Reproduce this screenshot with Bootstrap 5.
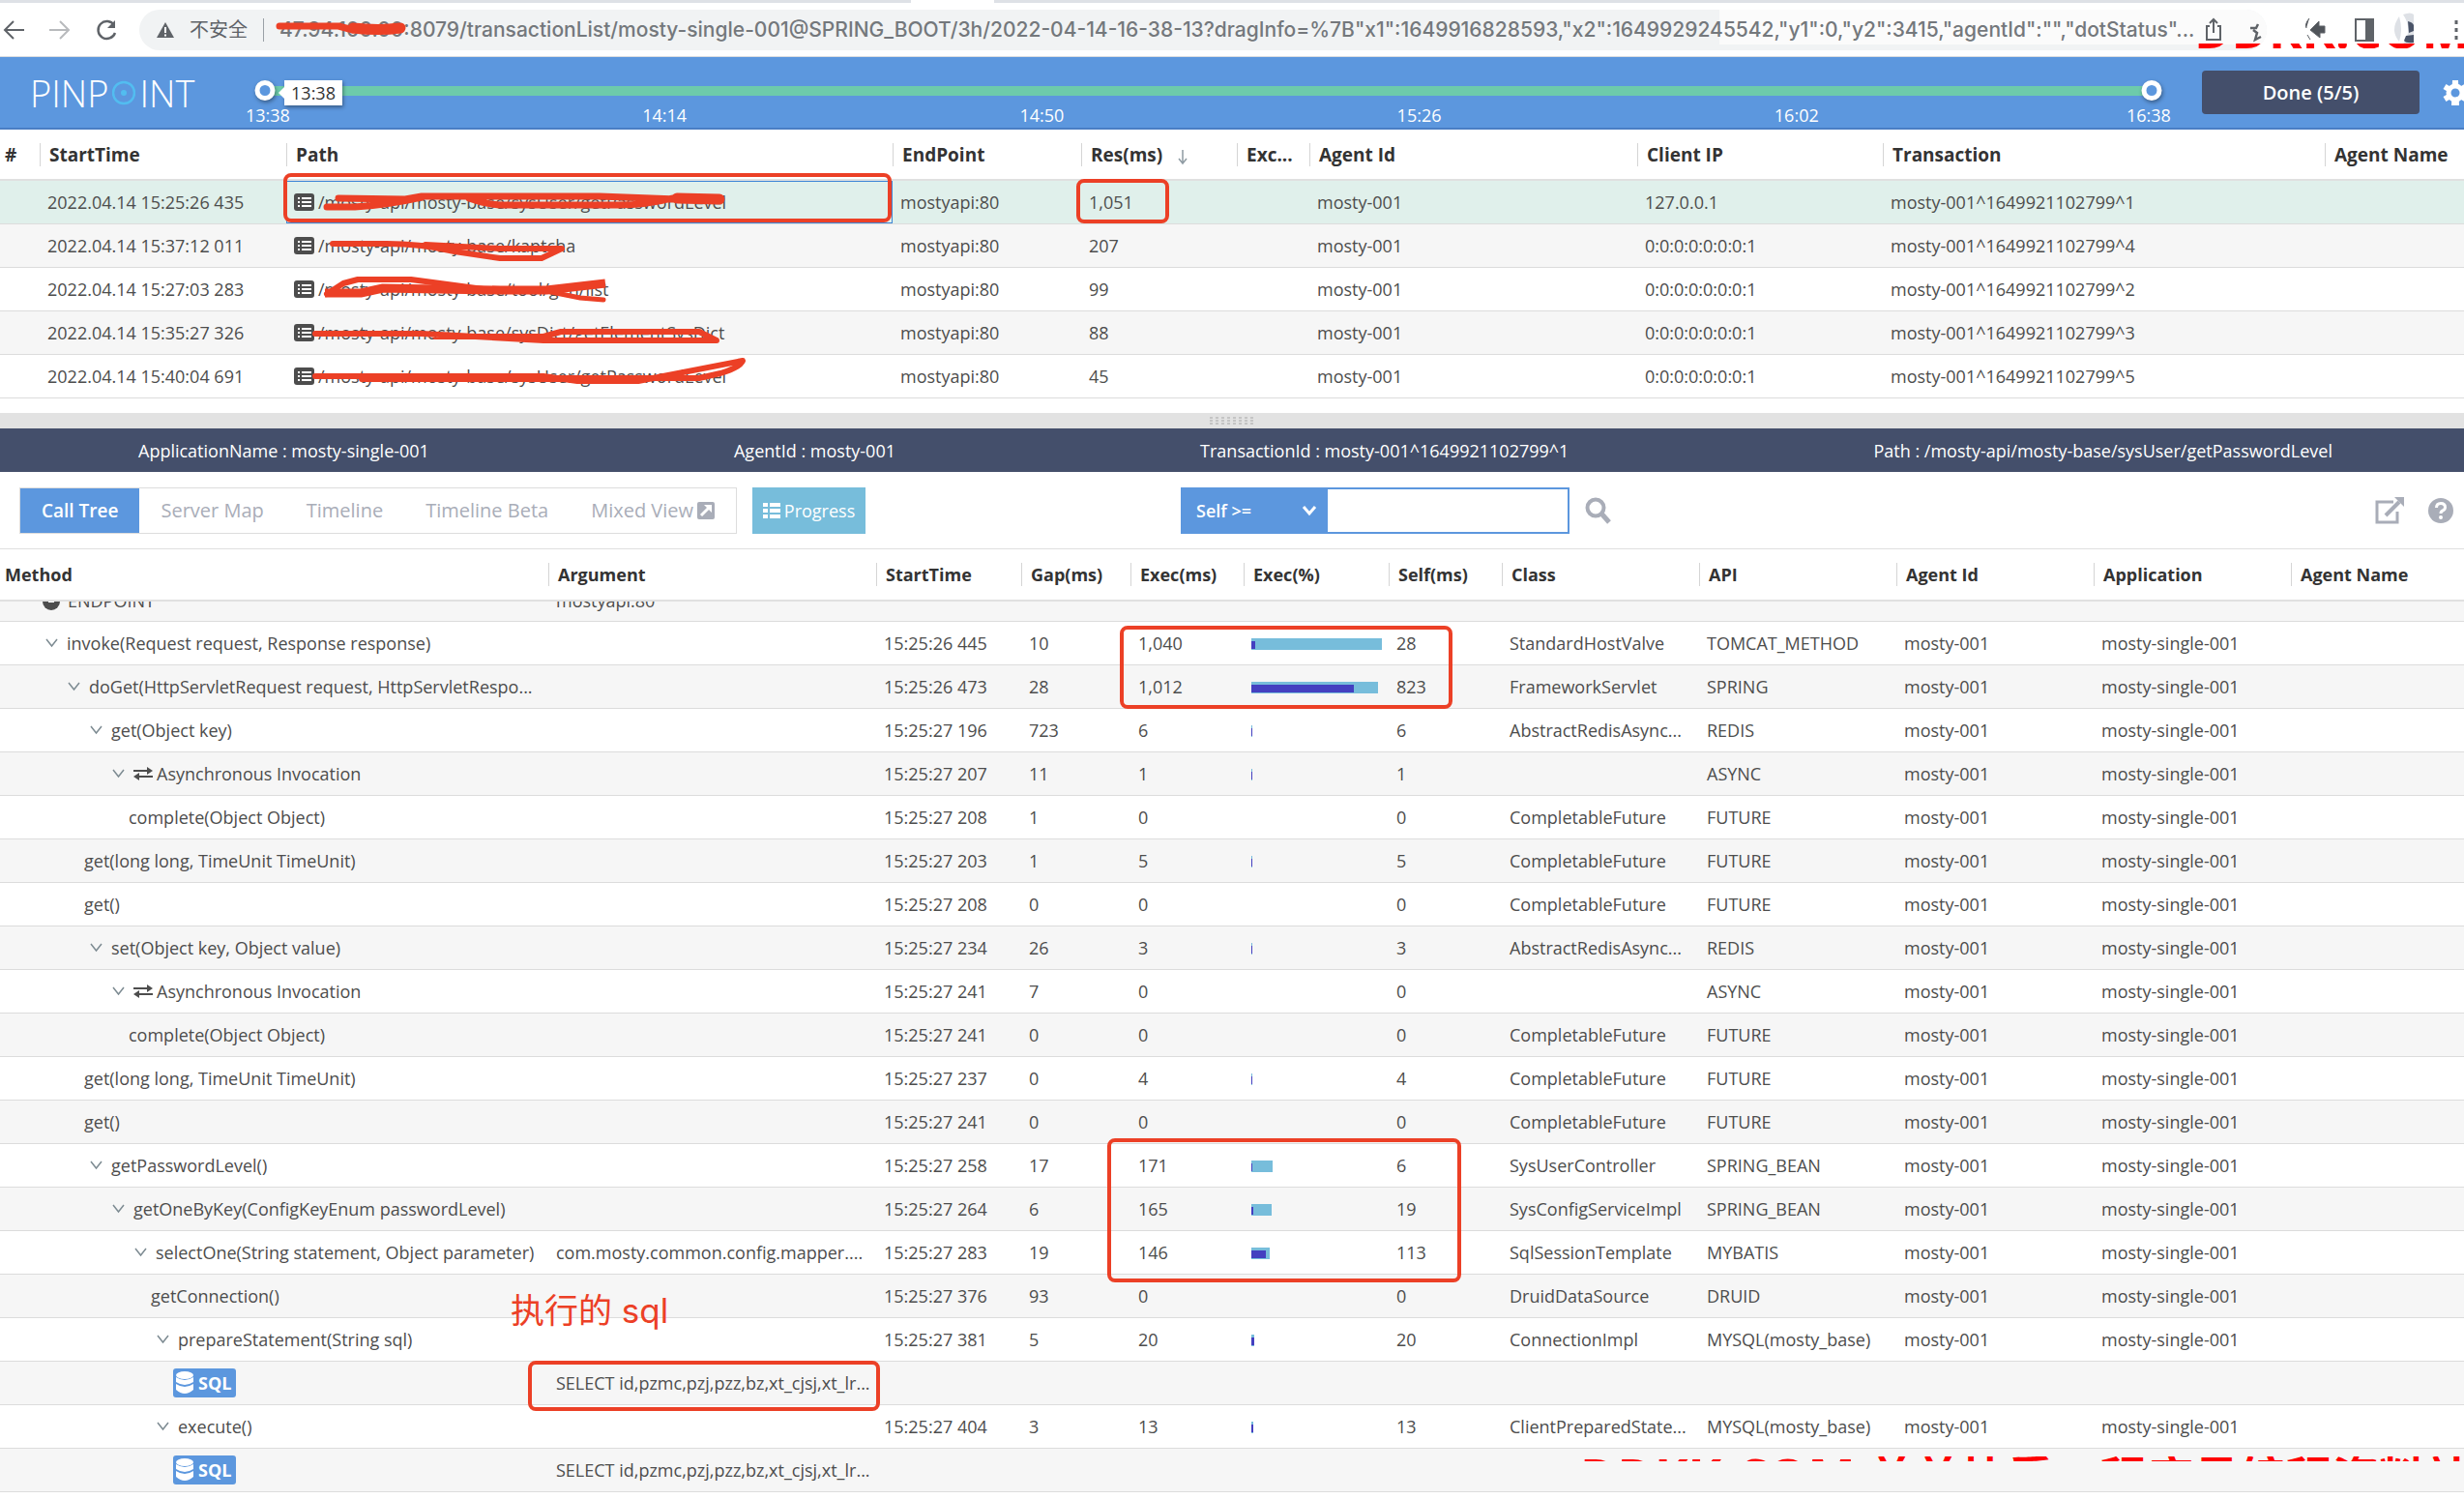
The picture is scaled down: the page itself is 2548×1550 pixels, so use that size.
<!DOCTYPE html>
<html lang="zh-CN">
<head>
<meta charset="utf-8">
<meta name="viewport" content="width=device-width, initial-scale=1">
<title>Pinpoint - Transaction List</title>
<link href="https://cdn.jsdelivr.net/npm/bootstrap@5.3.0/dist/css/bootstrap.min.css" rel="stylesheet">
<style>
:root{--blue:#5c97de;--navy:#444f6b;--line:#e0e0e0;--red:#ec4026}
body{font-family:"Open Sans","Noto Sans CJK SC",sans-serif;font-size:18px;line-height:24px;color:#4d4d4d;background:#fff;overflow:hidden;position:relative}
svg{display:block;flex:none}
.iconbtn{border:0;background:none;padding:0;color:inherit}
/* browser chrome */
.tabstrip{height:3px;background:#dee1e6}
.tabgap{width:86px;margin-left:942px;background:#fff}
.chrome{height:56px;border-bottom:1px solid #dadce0;padding-left:2px;color:#5f6368}
.omni{height:42px;margin-left:22px;border-radius:21px;background:#f1f3f4;overflow:hidden;padding-left:18px}
.omni-fade{background:#fbfbfb;height:36px;width:566px;right:0;top:0}
.urlbox{border:0;background:none;padding:0;font-family:Inter,sans-serif;font-size:21px;font-weight:500;color:#74787c;outline:0}
.omni-cn{font-size:20px}
.omni-sep{width:1px;height:24px;background:#9aa0a6}
/* header */
.topbar{height:75px;background:var(--blue);border-bottom:2px solid #4a7ec4;color:#fff;padding-left:31px;overflow:hidden}
.logo{font-weight:300;font-size:38px;line-height:40px;color:#fff;width:243px}
.logo svg{margin:0 4px}
.track{height:10px;background:#6dcbab}
.knob{width:21px;height:21px;border:5px solid #fff;border-radius:50%;background:var(--blue);box-shadow:1px 2px 4px rgba(0,0,0,.4);top:-6px}
.tip{left:20px;top:-6px;width:60px;height:26px;line-height:26px;background:#fff;color:#333;box-shadow:1px 2px 4px rgba(0,0,0,.4)}
.tip::before{content:"";position:absolute;left:-6px;top:7px;border:6px solid transparent;border-left:0;border-right-color:#fff}
.tick-first{margin-left:-20px}
.tick-last{width:0;flex:none;margin:0 26px 0 -26px;white-space:nowrap}
.btn-done{width:225px;height:45px;margin-left:52px;background:var(--navy);color:#fff;font-weight:600;font-size:20px;line-height:24px;border:0;border-radius:4px;padding:0}
/* grids */
.grid{table-layout:fixed;width:100%;border-collapse:separate;border-spacing:0}
.grid th{height:53px;padding:0;border-bottom:2px solid var(--line);color:#333;font-weight:700}
#transactions th{font-size:19px}
#calltree th{height:54px}
.grid th>span{display:block;height:24px;padding-left:9px;border-left:1px solid #d5d5d5;white-space:nowrap}
.grid th:first-child>span{border-left:0;padding-left:5px}
.grid td{height:45px;padding:0 0 0 8px;border-bottom:1px solid #dcdcdc;white-space:nowrap;overflow:hidden;text-overflow:ellipsis}
.grid tr.alt td{background:#f6f6f6}
.grid tr.sel td{background:#e0f0eb}
.grid td.focus{box-shadow:inset 0 0 0 1px #3f86d6}
.splitter{height:16px;background:#e2e2e2;margin-top:15px}
.infobar{height:45px;background:var(--navy);color:#fff;padding:0 136px 0 143px}
/* tree toolbar */
.tools{height:80px;border-bottom:1px solid var(--line);padding:0 11px 0 20px}
.views{height:48px;border:1px solid #ddd}
.views button{border:0;background:none;padding:0 22px;font-size:20px;color:#a9adb8}
.views button.on{background:var(--blue);color:#fff;font-weight:600;font-size:19px}
.btn-progress{height:48px;width:117px;margin-left:16px;background:#77bddb;color:#fff;border:0;border-radius:0;padding:0;font-size:18px}
.selfbox{width:152px;height:48px}
.selfbox select{appearance:none;width:100%;height:48px;border:0;border-radius:0;background:var(--blue);color:#fff;font-weight:600;padding:0 16px}
.selfbox svg{right:11px;top:17px}
.selfval{width:250px;height:48px;border:2px solid var(--blue);border-left:0;outline:0;padding:0 8px}
.finder{margin-left:326px}
.clipcell{height:20px;overflow:hidden;display:flex;align-items:flex-end}
.grid tr.cut td{height:21px}
.clipcell>div{height:33px;display:flex;align-items:flex-start}
.grid td.meth{padding-left:0}
.chev{width:13px;margin-right:9px}
.bar{height:12px;background:#77bddb;min-width:1px;margin-top:2px}
.barbox{width:136px}
.bar-self{height:8px;top:3px;left:0;background:#4440c0;min-width:1px}
.sqltag{width:65px;height:30px;background:var(--blue);color:#fff;font-weight:700;border-radius:3px;padding:0 2px}
/* annotations drawn over the page */
.anno{left:0;top:0;pointer-events:none}
.note{left:528px;top:1332px;color:var(--red);font-family:Inter,"Noto Sans CJK SC",sans-serif;font-size:35px;line-height:46px}
.wm{color:#f00;font-weight:700;font-size:52px;line-height:60px;height:5px;overflow:hidden;white-space:nowrap;right:0}
.wm-top{left:2269px;top:45px}
.wm-top div{margin-top:-45px}
.wm-bot{left:1634px;top:1506px}
.wm-bot div{margin-top:-10px}
.wm-cn{font-size:48px}
</style>
</head>
<body>
<div class="tabstrip d-flex"><div class="tabgap"></div></div>
<div class="chrome d-flex align-items-center">
  <button class="iconbtn" aria-label="Back"><svg width="24" height="24" fill="none" stroke="#5f6368" stroke-width="2"><path d="M23 12H3M12 3l-9 9 9 9"/></svg></button>
  <button class="iconbtn ms-4" aria-label="Forward"><svg width="24" height="24" fill="none" stroke="#b8babd" stroke-width="2"><path d="M1 12h20M12 3l9 9-9 9"/></svg></button>
  <button class="iconbtn ms-4" aria-label="Reload"><svg width="24" height="24" fill="none" stroke="#5f6368" stroke-width="2.4"><path d="M20 7a9 9 0 1 0 1 8"/><path d="M21 2v8h-8z" fill="#5f6368" stroke="none"/></svg></button>
  <div class="omni d-flex align-items-center position-relative flex-grow-1">
    <div class="omni-fade position-absolute"></div>
    <svg class="position-relative" width="18" height="18"><path d="M9 1l9 16H0z" fill="#5f6368"/><path d="M9 6v6M9 13.500v2" stroke="#fff" stroke-width="2"/></svg>
    <span class="omni-cn ms-3">不安全</span><span class="omni-sep mx-3"></span>
    <label class="visually-hidden" for="url">URL</label>
    <input id="url" class="urlbox flex-grow-1 position-relative" value="47.94.100.00:8079/transactionList/mosty-single-001@SPRING_BOOT/3h/2022-04-14-16-38-13?dragInfo=%7B&quot;x1&quot;:1649916828593,&quot;x2&quot;:1649929245542,&quot;y1&quot;:0,&quot;y2&quot;:3415,&quot;agentId&quot;:&quot;&quot;,&quot;dotStatus&quot;...">
    <svg class="position-relative" width="64" height="30" fill="none" stroke="#5f6368" stroke-width="2"><path d="M5 11H2v14h14V11h-3M9 18V4M5 8l4-4 4 4"/><path d="M47 13h6l2-4M50 15l4 3-2 7 6-3" stroke-width="2.500"/></svg>
  </div>
  <svg class="ms-4" width="180" height="44"><path d="M20 10q-5 6-3 10M21 22l9-9v5h6v7h-5v5zM18 27l3 5" fill="#50545a" stroke="#5f6368"/><path d="M68 11h18v22H68z" fill="none" stroke="#5f6368" stroke-width="2"/><path d="M78 10h9v24h-9z" fill="#5f6368"/><path d="M113 8q-10 14 0 26 4-12 0-26zM117 6q8-3 11 0v32h-12q12-16 1-32z" fill="#dee1e6"/><path d="M122 13q5 1 6 4v6l-5 2zM120 28l8-1v8q-8 1-10-2z" fill="#4a5468"/><path d="M172 12v4M172 20v4M172 28v4" stroke="#5f6368" stroke-width="3"/></svg>
</div>

<header class="topbar d-flex align-items-center">
  <a class="logo d-flex align-items-center text-decoration-none" href="#">PINP<svg width="24" height="26"><circle cx="12" cy="13" r="11" fill="none" stroke="#52bdf0" stroke-width="2.500"/><circle cx="12" cy="13" r="3" fill="#52bdf0"/></svg>INT</a>
  <div class="flex-grow-1 pt-4 mt-1">
    <div class="track position-relative">
      <div class="knob position-absolute start-0 translate-middle-x"></div>
      <div class="tip position-absolute text-center">13:38</div>
      <div class="knob position-absolute start-100 translate-middle-x"></div>
    </div>
    <div class="d-flex pt-2">
      <div class="w-100"><div class="tick-first">13:38</div></div><div class="w-100">14:14</div><div class="w-100">14:50</div><div class="w-100">15:26</div><div class="w-100">16:02</div><div class="tick-last">16:38</div>
    </div>
  </div>
  <button class="btn-done me-4">Done (5/5)</button>
  <button class="iconbtn" aria-label="Settings"><svg width="22" height="26" viewBox="0 0 22 26" overflow="hidden"><g fill="#fff"><circle cx="13" cy="13" r="9.500"/><path d="M10 0h6l1 26H9zM.5 9l3-5 22 13-3 5zM.5 17l3 5 22-13-3-5z"/></g><circle cx="13" cy="13" r="4.500" fill="#5c97de"/></svg></button>
</header>

<table class="grid" id="transactions">
  <colgroup><col style="width:41px"><col style="width:255px"><col><col style="width:195px"><col style="width:161px"><col style="width:75px"><col style="width:339px"><col style="width:254px"><col style="width:457px"><col style="width:144px"></colgroup>
  <thead><tr><th><span>#</span></th><th><span>StartTime</span></th><th><span>Path</span></th><th><span>EndPoint</span></th><th><span class="d-flex align-items-center">Res(ms)<svg class="ms-3 mt-1" width="10" height="22" fill="none" stroke="#8f9ba3" stroke-width="1.500"><path d="M5 4v14M1 13l4 5 4-5"/></svg></span></th><th><span>Exc...</span></th><th><span>Agent Id</span></th><th><span>Client IP</span></th><th><span>Transaction</span></th><th><span>Agent Name</span></th></tr></thead>
  <tbody></tbody>
</table>

<div class="splitter d-flex justify-content-center align-items-center"><svg width="48" height="8"><path d="M1 1h46M1 4h46M1 7h46" stroke="#c4c4c4" stroke-width="2" stroke-dasharray="3 3"/></svg></div>
<div class="infobar d-flex justify-content-between align-items-center">
  <span>ApplicationName : mosty-single-001</span><span>AgentId : mosty-001</span><span>TransactionId : mosty-001^1649921102799^1</span><span>Path : /mosty-api/mosty-base/sysUser/getPasswordLevel</span>
</div>

<div class="tools d-flex align-items-center">
  <div class="views d-flex">
    <button class="on">Call Tree</button><button>Server Map</button><button>Timeline</button><button>Timeline Beta</button>
    <button class="d-flex align-items-center">Mixed View<svg class="ms-1" width="18" height="18"><rect width="18" height="18" rx="2" fill="#a9adb8"/><path d="M4 14l8-8" stroke="#fff" stroke-width="3"/><path d="M7 3h8v8z" fill="#fff"/></svg></button>
  </div>
  <button class="btn-progress d-flex align-items-center justify-content-center"><svg class="me-1" width="18" height="16" fill="#fff"><path d="M0 0h5v4H0zM7 0h11v4H7zM0 6h5v4H0zM7 6h11v4H7zM0 12h5v4H0zM7 12h11v4H7z"/></svg>Progress</button>
  <div class="finder d-flex align-items-center">
    <div class="selfbox position-relative">
      <label class="visually-hidden" for="cond">Condition</label>
      <select id="cond"><option>Self &gt;=</option></select>
      <svg class="position-absolute" width="16" height="14" fill="none" stroke="#fff" stroke-width="3"><path d="M2 3l6 7 6-7"/></svg>
    </div>
    <label class="visually-hidden" for="val">Milliseconds</label>
    <input id="val" class="selfval" type="text">
    <button class="iconbtn ms-3" aria-label="Search"><svg width="28" height="28" fill="none" stroke="#a9adb8" stroke-width="4"><circle cx="11" cy="11" r="8.500"/><path d="M17 17l8 9" stroke-width="5"/></svg></button>
  </div>
  <button class="iconbtn ms-auto" aria-label="Open in new window"><svg width="31" height="28" fill="none" stroke="#a9adb8" stroke-width="3"><path d="M19 5H2v21h21V15"/><path d="M11 19L25 5" stroke-width="4"/><path d="M20 0h10v10z" fill="#a9adb8" stroke="none"/></svg></button>
  <button class="iconbtn ms-4" aria-label="Help"><svg width="26" height="26"><circle cx="13" cy="13" r="13" fill="#a9adb8"/><path d="M8.500 10q0-4.500 4.500-4.500t4.500 4q0 2.500-2.500 3.500-2 .8-2 3" fill="none" stroke="#fff" stroke-width="3"/><circle cx="13" cy="20" r="2" fill="#fff"/></svg></button>
</div>

<table class="grid" id="calltree">
  <colgroup><col><col style="width:339px"><col style="width:150px"><col style="width:113px"><col style="width:117px"><col style="width:150px"><col style="width:117px"><col style="width:204px"><col style="width:204px"><col style="width:204px"><col style="width:204px"><col style="width:179px"></colgroup>
  <thead><tr><th><span>Method</span></th><th><span>Argument</span></th><th><span>StartTime</span></th><th><span>Gap(ms)</span></th><th><span>Exec(ms)</span></th><th><span>Exec(%)</span></th><th><span>Self(ms)</span></th><th><span>Class</span></th><th><span>API</span></th><th><span>Agent Id</span></th><th><span>Application</span></th><th><span>Agent Name</span></th></tr></thead>
  <tbody></tbody>
</table>

<svg class="anno position-absolute" width="2548" height="1550" fill="none" stroke="#ec4026" stroke-width="4" stroke-linejoin="round">
  <rect x="295" y="181" width="625" height="47" rx="6"/><rect x="1115" y="187" width="92" height="42" rx="6"/>
  <rect x="1160" y="649" width="340" height="82" rx="6"/><rect x="1147" y="1179" width="362" height="145" rx="6"/><rect x="548" y="1409" width="360" height="48" rx="6"/>
  <g stroke-linecap="round">
    <path stroke-width="7" d="M289 27H350L365 31"/><path stroke-width="11" d="M365 29Q392 32 414 29"/>
    <path stroke-width="7" d="M350 205L419 206 436 203H620L700 206M338 214H367Q400 212 436 204M485 205Q505 212 520 212H637Q670 212 695 205"/><path stroke-width="11" d="M700 205L744 206"/>
    <path stroke-width="6" d="M344 252H400Q436 252 470 260L517 267H560L581 257H517L440 253"/>
    <path stroke-width="6" d="M338 304L355 293 370 289H425L500 299"/><path stroke-width="9" stroke-linecap="butt" d="M336 303H373L396 298 517 300H565L626 293"/><path stroke-width="5" d="M565 301L600 308 624 310"/>
    <path stroke-width="6" d="M326 345H436L562 352H741L723 343H580L562 348H450"/>
    <path stroke-width="6" d="M326 389H562L597 394H660Q700 386 768 373 765 380 745 386L723 391H562M374 392H660"/>
  </g>
</svg>
<div class="note position-absolute">执行的 sql</div>
<div class="wm wm-top position-absolute"><div>DDKK.COM</div></div>
<div class="wm wm-bot position-absolute"><div>DDKK.COM <span class="wm-cn">弟弟快看，程序员编程资料站</span></div></div>

<script>
const listIcon='<svg class="me-1" width="21" height="18"><rect width="21" height="18" rx="3" fill="#4d4d4d"/><path d="M4 5h2M4 9h2M4 13h2M8 5h10M8 9h10M8 13h10" stroke="#fff" stroke-width="2"/></svg>';
const tx=[
 ['2022.04.14 15:25:26 435','/mosty-api/mosty-base/sysUser/getPasswordLevel','1,051','127.0.0.1',1],
 ['2022.04.14 15:37:12 011','/mosty-api/mosty-base/kaptcha','207','0:0:0:0:0:0:0:1',4],
 ['2022.04.14 15:27:03 283','/mosty-api/mosty-base/tool/gen/list','99','0:0:0:0:0:0:0:1',2],
 ['2022.04.14 15:35:27 326','/mosty-api/mosty-base/sysDict/getElementSysDict','88','0:0:0:0:0:0:0:1',3],
 ['2022.04.14 15:40:04 691','/mosty-api/mosty-base/sysUser/getPasswordLevel','45','0:0:0:0:0:0:0:1',5]];
document.querySelector('#transactions tbody').innerHTML=tx.map((r,i)=>`<tr class="${i?(i%2?'alt':''):'sel'}"><td></td><td>${r[0]}</td><td class="${i?'':'focus'}"><div class="d-flex align-items-center">${listIcon}${r[1]}</div></td><td>mostyapi:80</td><td>${r[2]}</td><td></td><td>mosty-001</td><td>${r[3]}</td><td>mosty-001^1649921102799^${r[4]}</td><td></td></tr>`).join('');

const chev='<svg class="chev" width="13" height="10" fill="none" stroke="#7d8b92" stroke-width="1.500"><path d="M1 1l5.500 7L12 1"/></svg>';
const swap='<svg class="me-1" width="20" height="14"><path d="M0 4h14M6 10h14" stroke="#4d4d4d" stroke-width="2"/><path d="M14 0l6 4-6 4zM6 6l-6 4 6 4z" fill="#4d4d4d"/></svg>';
const db='<svg width="20" height="24" fill="#fff"><ellipse cx="10" cy="4" rx="9" ry="4"/><path d="M1 6q9 6 18 0v5q-9 6-18 0zM1 13q9 6 18 0v6q-9 8-18 0z"/></svg>';
/* kind: c = branch, l = leaf, a = asynchronous branch, s = SQL */
const rows=[
 ['c',0,'invoke(Request request, Response response)','','15:25:26 445','10','1,040','28','StandardHostValve','TOMCAT_METHOD'],
 ['c',1,'doGet(HttpServletRequest request, HttpServletRespo...','','15:25:26 473','28','1,012','823','FrameworkServlet','SPRING'],
 ['c',2,'get(Object key)','','15:25:27 196','723','6','6','AbstractRedisAsync...','REDIS'],
 ['a',3,'Asynchronous Invocation','','15:25:27 207','11','1','1','','ASYNC'],
 ['l',4,'complete(Object Object)','','15:25:27 208','1','0','0','CompletableFuture','FUTURE'],
 ['l',2,'get(long long, TimeUnit TimeUnit)','','15:25:27 203','1','5','5','CompletableFuture','FUTURE'],
 ['l',2,'get()','','15:25:27 208','0','0','0','CompletableFuture','FUTURE'],
 ['c',2,'set(Object key, Object value)','','15:25:27 234','26','3','3','AbstractRedisAsync...','REDIS'],
 ['a',3,'Asynchronous Invocation','','15:25:27 241','7','0','0','','ASYNC'],
 ['l',4,'complete(Object Object)','','15:25:27 241','0','0','0','CompletableFuture','FUTURE'],
 ['l',2,'get(long long, TimeUnit TimeUnit)','','15:25:27 237','0','4','4','CompletableFuture','FUTURE'],
 ['l',2,'get()','','15:25:27 241','0','0','0','CompletableFuture','FUTURE'],
 ['c',2,'getPasswordLevel()','','15:25:27 258','17','171','6','SysUserController','SPRING_BEAN'],
 ['c',3,'getOneByKey(ConfigKeyEnum passwordLevel)','','15:25:27 264','6','165','19','SysConfigServiceImpl','SPRING_BEAN'],
 ['c',4,'selectOne(String statement, Object parameter)','com.mosty.common.config.mapper....','15:25:27 283','19','146','113','SqlSessionTemplate','MYBATIS'],
 ['l',5,'getConnection()','','15:25:27 376','93','0','0','DruidDataSource','DRUID'],
 ['c',5,'prepareStatement(String sql)','','15:25:27 381','5','20','20','ConnectionImpl','MYSQL(mosty_base)'],
 ['s',6,'SQL','SELECT id,pzmc,pzj,pzz,bz,xt_cjsj,xt_lr...'],
 ['c',5,'execute()','','15:25:27 404','3','13','13','ClientPreparedState...','MYSQL(mosty_base)'],
 ['s',6,'SQL','SELECT id,pzmc,pzj,pzz,bz,xt_cjsj,xt_lr...']];
const num=s=>+s.replace(',','');
const meth=(k,l,t)=>{
 const pad=(k==='c'||k==='a'?47:41)+23*l;
 const body=k==='s'?`<span class="sqltag d-flex align-items-center">${db}<span class="ms-1">${t}</span></span>`:(k==='l'?'':chev)+(k==='a'?swap:'')+t;
 return `<div class="d-flex align-items-center" style="padding-left:${pad}px">${body}</div>`};
const bar=(e,s)=>e?`<div class="barbox"><div class="bar position-relative" style="width:${Math.round(e/1051*136)}px"><div class="bar-self position-absolute" style="width:${Math.round(s/1051*136)}px"></div></div></div>`:'';
const cut='<tr class="alt cut"><td class="meth"><div class="clipcell"><div style="padding-left:44px"><svg class="me-2 mt-1" width="18" height="18"><circle cx="9" cy="9" r="9" fill="#4d4d4d"/><path d="M6 6h6v4H6z" fill="#fff"/></svg>ENDPOINT</div></div></td><td><div class="clipcell"><div>mostyapi:80</div></div></td>'+'<td></td>'.repeat(10)+'</tr>';
document.querySelector('#calltree tbody').innerHTML=cut+rows.map((r,i)=>{
 const s=r[0]==='s';
 return `<tr class="${i%2?'alt':''}"><td class="meth">${meth(r[0],r[1],r[2])}</td><td>${r[3]}</td>`+(s?'<td></td>'.repeat(10):
 `<td>${r[4]}</td><td>${r[5]}</td><td>${r[6]}</td><td>${bar(num(r[6]),num(r[7]))}</td><td>${r[7]}</td><td>${r[8]}</td><td>${r[9]}</td><td>mosty-001</td><td>mosty-single-001</td><td></td>`)+'</tr>'}).join('');
</script>
<script src="https://cdn.jsdelivr.net/npm/bootstrap@5.3.0/dist/js/bootstrap.bundle.min.js"></script>
</body>
</html>
